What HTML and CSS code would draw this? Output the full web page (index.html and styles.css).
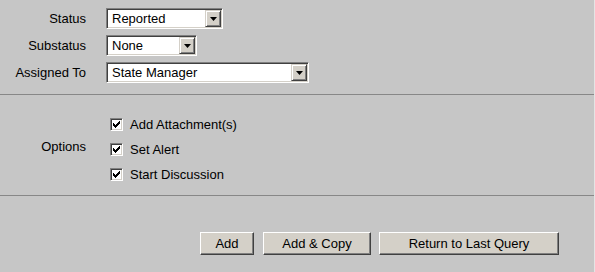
FILE: index.html
```html
<!DOCTYPE html>
<html>
<head>
<meta charset="utf-8">
<link rel="stylesheet" href="styles.css">
</head>
<body>
<div class="form">
  <section class="fields">
    <div class="row">
      <span class="lbl">Status</span>
      <div class="combo w-status"><span class="val">Reported</span><span class="drop"><svg width="7" height="4" viewBox="0 0 7 4"><path d="M0 0h7L3.5 4z" fill="#000"/></svg></span></div>
    </div>
    <div class="row">
      <span class="lbl">Substatus</span>
      <div class="combo w-sub"><span class="val">None</span><span class="drop"><svg width="7" height="4" viewBox="0 0 7 4"><path d="M0 0h7L3.5 4z" fill="#000"/></svg></span></div>
    </div>
    <div class="row">
      <span class="lbl">Assigned To</span>
      <div class="combo w-assign"><span class="val">State Manager</span><span class="drop"><svg width="7" height="4" viewBox="0 0 7 4"><path d="M0 0h7L3.5 4z" fill="#000"/></svg></span></div>
    </div>
  </section>
  <div class="sep"></div>
  <section class="options">
    <span class="lbl opt-lbl">Options</span>
    <div class="checks">
      <div class="opt"><span class="cb"><svg width="7" height="7" viewBox="0 0 7 7"><path d="M0 2h1v1h1v1h1v-1h1v-1h1v-1h1v-1h1v3h-1v1h-1v1h-1v1h-1v1h-1v-1h-1v-1h-1z" fill="#000"/></svg></span><span>Add Attachment(s)</span></div>
      <div class="opt"><span class="cb"><svg width="7" height="7" viewBox="0 0 7 7"><path d="M0 2h1v1h1v1h1v-1h1v-1h1v-1h1v-1h1v3h-1v1h-1v1h-1v1h-1v1h-1v-1h-1v-1h-1z" fill="#000"/></svg></span><span>Set Alert</span></div>
      <div class="opt"><span class="cb"><svg width="7" height="7" viewBox="0 0 7 7"><path d="M0 2h1v1h1v1h1v-1h1v-1h1v-1h1v-1h1v3h-1v1h-1v1h-1v1h-1v1h-1v-1h-1v-1h-1z" fill="#000"/></svg></span><span>Start Discussion</span></div>
    </div>
  </section>
  <div class="sep"></div>
  <section class="actions">
    <button class="btn w-add">Add</button>
    <button class="btn w-copy">Add &amp; Copy</button>
    <button class="btn w-ret">Return to Last Query</button>
  </section>
</div>
</body>
</html>
```
FILE: styles.css
```css
html, body {
  margin: 0;
  padding: 0;
  background: #c6c6c6;
}
body {
  font-family: "Liberation Sans", Arial, sans-serif;
  font-size: 13px;
  color: #000;
}
.form {
  width: 594px;
  height: 272px;
  border-right: 1px solid #e4e4e4;
}
.fields {
  display: flex;
  flex-direction: column;
  gap: 6px;
  padding: 8px 0 11px 0;
}
.row {
  display: flex;
  align-items: center;
  gap: 20px;
  height: 21px;
}
.lbl {
  width: 86px;
  text-align: right;
  flex: none;
}
.opt-lbl {
  margin-bottom: 6px;
}
.combo {
  box-sizing: border-box;
  height: 21px;
  display: flex;
  align-items: stretch;
  background: #fff;
  border: 1px solid;
  border-color: #808080 #ffffff #ffffff #808080;
  box-shadow: inset 1px 1px 0 #404040, inset -1px -1px 0 #d4d0c8;
  padding: 1px;
}
.w-status { width: 117px; }
.w-sub { width: 91px; }
.w-assign { width: 203px; }
.val {
  flex: 1;
  padding-left: 4px;
  line-height: 17px;
  white-space: nowrap;
}
.drop {
  box-sizing: border-box;
  width: 16px;
  background: #d4d0c8;
  border: 1px solid;
  border-color: #d4d0c8 #404040 #404040 #d4d0c8;
  box-shadow: inset 1px 1px 0 #ffffff, inset -1px -1px 0 #808080;
  display: flex;
  align-items: center;
  justify-content: center;
}
.sep {
  height: 1px;
  background: #878787;
}
.options {
  display: flex;
  align-items: center;
  gap: 24px;
  padding: 17px 0 8px 0;
}
.checks {
  display: flex;
  flex-direction: column;
}
.opt {
  display: flex;
  align-items: center;
  gap: 7px;
  height: 25px;
}
.cb {
  box-sizing: border-box;
  width: 13px;
  height: 13px;
  background: #fff;
  border: 1px solid;
  border-color: #808080 #ffffff #ffffff #808080;
  box-shadow: inset 1px 1px 0 #404040, inset -1px -1px 0 #d4d0c8;
  display: flex;
  align-items: center;
  justify-content: center;
}
.actions {
  display: flex;
  gap: 9px;
  padding: 36px 0 0 200px;
}
.btn {
  box-sizing: border-box;
  height: 23px;
  padding: 0;
  font-family: "Liberation Sans", Arial, sans-serif;
  font-size: 13px;
  color: #000;
  background: #d4d0c8;
  border: 1px solid;
  border-color: #ffffff #404040 #404040 #ffffff;
  box-shadow: inset -1px -1px 0 #808080;
}
.w-add { width: 54px; }
.w-copy { width: 108px; }
.w-ret { width: 180px; }
.w-copy + .w-ret { margin-left: -1px; }
```
